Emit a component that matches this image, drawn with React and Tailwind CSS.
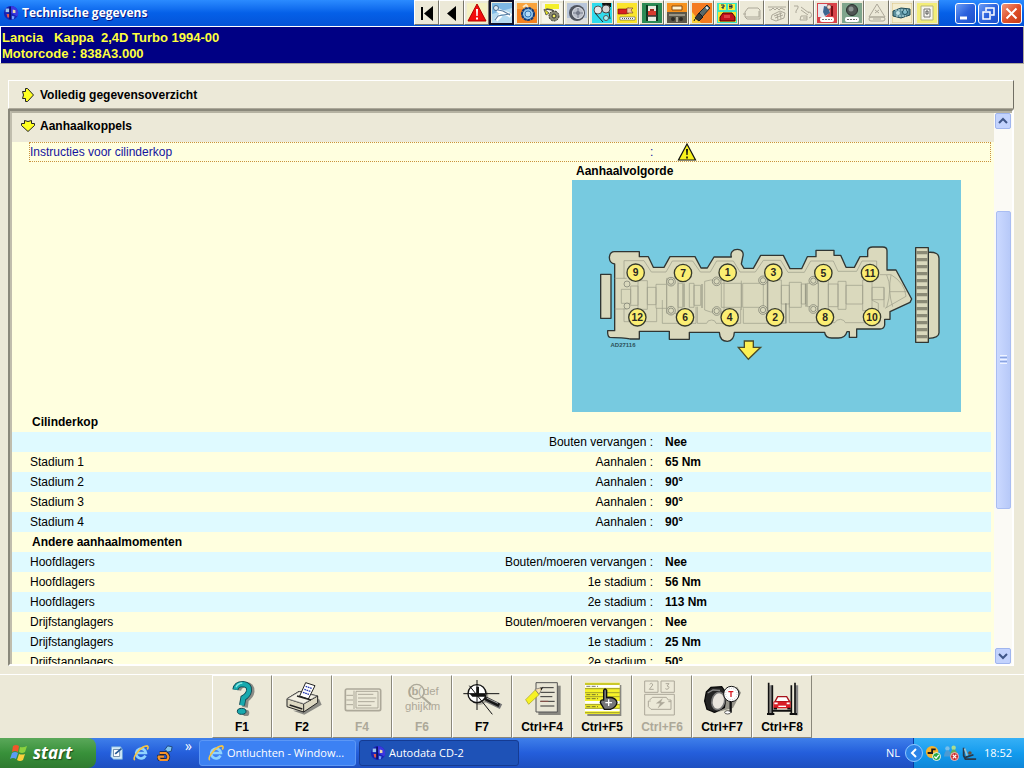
import React, { useState } from "react";

const rows = [
  { title: "Cilinderkop" },
  { label: "", name: "Bouten vervangen", value: "Nee" },
  { label: "Stadium 1", name: "Aanhalen", value: "65 Nm" },
  { label: "Stadium 2", name: "Aanhalen", value: "90°" },
  { label: "Stadium 3", name: "Aanhalen", value: "90°" },
  { label: "Stadium 4", name: "Aanhalen", value: "90°" },
  { title: "Andere aanhaalmomenten" },
  { label: "Hoofdlagers", name: "Bouten/moeren vervangen", value: "Nee" },
  { label: "Hoofdlagers", name: "1e stadium", value: "56 Nm" },
  { label: "Hoofdlagers", name: "2e stadium", value: "113 Nm" },
  { label: "Drijfstanglagers", name: "Bouten/moeren vervangen", value: "Nee" },
  { label: "Drijfstanglagers", name: "1e stadium", value: "25 Nm" },
  { label: "Drijfstanglagers", name: "2e stadium", value: "50°" },
];

// Title bar icons, drawn on a 20x20 grid
const modules = [
  {
    name: "Eerste",
    art: (
      <>
        <path d="M4 4h2v13H4z" fill="#000" />
        <path d="M16 3v15L7 10.500z" fill="#000" />
      </>
    ),
  },
  { name: "Vorige", art: <path d="M14 3v15L5 10.500z" fill="#000" /> },
  {
    name: "Waarschuwingen",
    art: (
      <>
        <path d="M0 0h20v20H0z" fill="#f4f1c4" />
        <path d="M10 1l9 17H1z" fill="#f20d0d" stroke="#b30000" />
        <path d="M9 6h2l-.3 7H9.300zM9 14.500h2v2H9z" fill="#fff" />
      </>
    ),
  },
  {
    name: "Technische gegevens",
    active: true,
    art: (
      <>
        <path d="M0 0h20v20H0z" fill="#b5daf1" />
        <path d="M0 0h20v5L0 11z" fill="#7db8e4" />
        <path d="M3 4l4 4 9 3 3 2M4 17l5-5" fill="none" stroke="#fff" strokeWidth="4" />
        <path d="M6 7l5 1 7 4M3 17l3-4 5-1 7-1" fill="none" stroke="#5b7fa3" strokeWidth="1.200" />
        <circle cx="4" cy="5" r="2.500" fill="#dcebf5" stroke="#46698c" />
      </>
    ),
  },
  {
    name: "Distributieriem",
    art: (
      <>
        <path d="M0 0h20v20H0z" fill="#f58220" />
        <path d="M0 0h20v6H0z" fill="#f9a33c" />
        <circle cx="11" cy="11" r="6" fill="#8fc4ea" stroke="#123a78" strokeWidth="2" strokeDasharray="3 .5" />
        <circle cx="11" cy="11" r="3" fill="#b7dcf5" stroke="#3274b5" />
        <path d="M6 4l3-2 2 2" fill="none" stroke="#fbe7c4" strokeWidth="2" />
      </>
    ),
  },
  {
    name: "Onderhoud",
    art: (
      <>
        <path d="M0 0h20v20H0z" fill="#f7f5ea" />
        <path d="M3 1h14v5H3z" fill="#f3ef2b" />
        <path d="M2 8l3-2 5 1 4 3" fill="none" stroke="#555" strokeWidth="1.500" />
        <circle cx="12" cy="13" r="5" fill="#8b8b76" stroke="#33332a" strokeDasharray="2 1" />
        <circle cx="12" cy="13" r="2" fill="#f1ee61" stroke="#333" />
        <path d="M2 6l5 4-3 2z" fill="#ece91b" stroke="#665" />
      </>
    ),
  },
  {
    name: "Banden",
    art: (
      <>
        <path d="M0 0h20v20H0z" fill="#b9c6da" />
        <path d="M0 15h20v5H0z" fill="#dedfe0" />
        <ellipse cx="10" cy="10" rx="8" ry="8" fill="#50545e" />
        <circle cx="11" cy="10" r="5.500" fill="#b9bdc8" stroke="#e0e3ea" />
        <circle cx="11" cy="10" r="2" fill="#6a6f7e" />
        <path d="M11 5v10M6 10h10" stroke="#777d8c" />
      </>
    ),
  },
  {
    name: "Riemen",
    art: (
      <>
        <path d="M0 0h20v20H0z" fill="#2fdced" />
        <path d="M10 0h9v4l-8 1z" fill="#111" />
        <circle cx="6" cy="7" r="4" fill="#e8e8e8" stroke="#555" />
        <circle cx="14" cy="6" r="4" fill="#d5d5d5" stroke="#444" />
        <circle cx="14" cy="15" r="2.500" fill="#a8f1f6" stroke="#555" />
        <path d="M3 10l8 9M17 9l1 7" stroke="#222" />
      </>
    ),
  },
  {
    name: "Sleutels",
    art: (
      <>
        <path d="M0 0h20v20H0z" fill="#fbe52c" />
        <path d="M1 6h8l3-1v5l-3 1H1z" fill="#d91f1f" stroke="#701010" strokeWidth=".6" />
        <path d="M10 5h6l-2 2 2 3h-6z" fill="#f3c4a2" stroke="#6b4120" strokeWidth=".6" />
        <path d="M3 14h15v3H3z" fill="#fff" stroke="#555" strokeWidth=".6" />
        <path d="M5 15.500h11" stroke="#555" strokeDasharray="1 1" />
      </>
    ),
  },
  {
    name: "Hefpunten",
    art: (
      <>
        <path d="M0 0h20v20H0z" fill="#2c8a55" />
        <path d="M5 3h10v15H5z" fill="#e6e9df" />
        <path d="M5 2v16M15 2v16" stroke="#0d3820" strokeWidth="2" />
        <path d="M6 8h8v5H6z" fill="#d83a2e" />
        <path d="M5 13h10" stroke="#333" strokeWidth="1.500" />
        <path d="M8 6h4v2H8z" fill="#9c2a20" />
      </>
    ),
  },
  {
    name: "Motormanagement",
    art: (
      <>
        <path d="M0 0h20v10H0z" fill="#f6921e" />
        <path d="M0 9h20v11H0z" fill="#5c584b" />
        <path d="M5 3h10v4H5z" fill="#fdf1cf" stroke="#8a4b0a" />
        <path d="M2 11h16v2H2z" fill="#989383" />
        <circle cx="6" cy="16" r="2" fill="#2c2a24" />
        <circle cx="14" cy="16" r="2" fill="#2c2a24" />
        <path d="M9 14h2v5H9z" fill="#a9a493" />
      </>
    ),
  },
  {
    name: "Bougies",
    art: (
      <>
        <path d="M0 0h20v20H0z" fill="#f47b20" />
        <path d="M0 9l9 11H0z" fill="#fbd13a" />
        <path d="M15 2l3 3-8 9-4-3z" fill="#5a6a6a" stroke="#20292c" />
        <path d="M7 10l4 4-4 4-4-3z" fill="#31393b" stroke="#161b1c" />
        <path d="M14 4l2 2" stroke="#e5eded" strokeWidth="2" />
        <path d="M3 16l-1 2" stroke="#111" />
      </>
    ),
  },
  {
    name: "Storingscodes",
    art: (
      <>
        <path d="M0 0h20v20H0z" fill="#3fe4c2" />
        <path d="M2 1h7v6H2zM11 1h7v6h-7z" fill="#f7f13c" />
        <path d="M4 2h3v2H5v1h2M12 2h3v3h-3M12 3.500h3" fill="none" stroke="#1c2450" />
        <path d="M1 9h18v10H1z" fill="#f7e332" />
        <path d="M3 18v-4l3-4h9l3 4v4z" fill="#c4131c" stroke="#4b0508" />
        <path d="M7 12h6v3H7z" fill="#e04242" />
      </>
    ),
  },
  {
    name: "Airconditioning",
    off: true,
    art: <path d="M3 14V9l3-4h10l2 2v9H5l-2-2h14V8M1 11h3" />,
  },
  {
    name: "Motor",
    off: true,
    art: <path d="M1 4h18M2 7h2l2-2 2 2 2-2 2 2 2-2 4 2M5 12l8-4 5 2-1 5-8 3-5-2zM7 13l8-3M8 15l8-3M11 17l-1-6M14 16l-1-7" />,
  },
  {
    name: "Diagnose",
    off: true,
    art: <path d="M2 3h4v2L4 8v2M9 4l8 6M9 7l7 5M16 9a3 3 0 1 1 1 6M9 13h6v4H8zM11 15h4" />,
  },
  {
    name: "Airbag",
    art: (
      <>
        <path d="M0 0h20v20H0z" fill="#d8434a" />
        <path d="M1 1h9l3 8-5 5H1z" fill="#e6e7ef" />
        <path d="M7 3l4 1 2 6-5 3-2-4z" fill="#3d6490" />
        <circle cx="12" cy="4" r="2.200" fill="#f5d9cb" stroke="#333" strokeWidth=".5" />
        <path d="M15 3v10" stroke="#7a0d14" strokeWidth="2" />
        <rect x="3" y="14" width="14" height="5" rx="2" fill="#fff" />
        <path d="M5 16.500h10" stroke="#777" strokeDasharray="2 1" />
      </>
    ),
  },
  {
    name: "ABS",
    art: (
      <>
        <path d="M0 0h20v20H0z" fill="#7fa58c" />
        <circle cx="10" cy="7" r="5.500" fill="#4f5553" stroke="#29302d" />
        <circle cx="9" cy="6" r="2.500" fill="#8b9491" />
        <rect x="3" y="14" width="14" height="5" rx="2" fill="#fff" />
        <path d="M5 16.500h10" stroke="#666" strokeDasharray="2 1" />
      </>
    ),
  },
  {
    name: "Stabiliteit",
    off: true,
    art: <path d="M10 1L2 14h16zM8 7l4 3M12 7l-4 3M4 14h12q2 0 2 2t-2 2H4q-2 0-2-2t2-2M6 16h8" />,
  },
  {
    name: "Klimaatregeling",
    art: (
      <>
        <path d="M0 0h20v20H0z" fill="#f4edcf" stroke="#d9c384" />
        <path d="M1 8l8-3 9 1v6l-9 3-8-2z" fill="#5b8f9d" stroke="#1f4955" />
        <circle cx="6" cy="10" r="2" fill="#bfe1e6" />
        <circle cx="13" cy="9" r="2.500" fill="#82bccb" stroke="#1e4f5e" />
        <path d="M3 7h13M4 13h10" stroke="#bcdde2" strokeDasharray="2 1" />
      </>
    ),
  },
  {
    name: "Elektrische schema's",
    art: (
      <>
        <path d="M0 0h20v20H0z" fill="#f3ed78" />
        <path d="M4 3h12v14H4z" fill="#f6f5ee" stroke="#b8b57c" />
        <path d="M7 6h6v8H7z" fill="none" stroke="#777" />
        <path d="M9 8h2v3H9z" fill="none" stroke="#555" />
      </>
    ),
  },
];

// Function key icons, drawn on a 174x120 grid
const functionKeys = [
  {
    label: "F1",
    art: (
      <>
        <g fill="none" stroke="#8b8b85" strokeWidth="17">
          <path d="M76 43Q79 26 98 26Q117 28 116 47Q114 61 99 70L96 94" />
        </g>
        <circle cx="99" cy="111" r="10" fill="#8b8b85" />
        <path d="M67 41Q70 24 90 24Q110 26 108 44Q106 58 91 66L87 88" fill="none" stroke="#0b4650" strokeWidth="18" />
        <path d="M67 41Q70 24 90 24Q110 26 108 44Q106 58 91 66L87 88" fill="none" stroke="#18a9ae" strokeWidth="13" />
        <path d="M69 34Q74 22 88 21" fill="none" stroke="#8be9e4" strokeWidth="4" />
        <ellipse cx="86" cy="106" rx="13" ry="9" fill="#18a9ae" stroke="#0b4650" strokeWidth="3" />
      </>
    ),
  },
  {
    label: "F2",
    art: (
      <>
        <path d="M60 104l34 12 52-30-8-18-50 35z" fill="#8b8b85" />
        <path d="M42 68L78 46l56 14v20l-42 28-50-16z" fill="#ddd8c2" stroke="#222" strokeWidth="3" />
        <path d="M42 68l50 16 42-24M92 84v24" fill="none" stroke="#222" strokeWidth="3" />
        <path d="M43 68l36-21 52 13-39 23z" fill="#f3f0e3" stroke="#777" strokeWidth="2" />
        <path d="M50 87l38 12" stroke="#222" strokeWidth="4" />
        <path d="M80 60L98 20l28 9-20 40z" fill="#fff" stroke="#222" strokeWidth="3" />
        <path d="M98 31l18 6M94 40l18 6M90 49l18 6" stroke="#2438b0" strokeWidth="4" strokeDasharray="5 2" />
        <path d="M72 60l42 12" stroke="#222" strokeWidth="4" />
      </>
    ),
  },
  {
    label: "F4",
    off: true,
    art: (
      <>
        <rect x="37" y="39" width="106" height="65" rx="5" strokeWidth="5" />
        <path d="M63 44v55M40 58h20M40 72h20M40 86h20M69 46h66v50H69z" strokeWidth="3" />
        <path d="M75 55h46M75 66h55M75 77h50M75 88h40" strokeWidth="3" />
      </>
    ),
  },
  {
    label: "F6",
    off: true,
    art: (
      <>
        <circle cx="71" cy="47" r="22" strokeWidth="4" />
        <path d="M87 62l27 24" strokeWidth="6" />
        <g stroke="none" fill="#aca899" fontFamily="Liberation Sans, sans-serif" fontWeight="normal">
          <text x="44" y="58" fontSize="34" fontWeight="bold">(b</text>
          <text x="75" y="58" fontSize="34">(</text>
          <text x="90" y="58" fontSize="34">def</text>
          <text x="36" y="102" fontSize="34">ghijklm</text>
        </g>
      </>
    ),
  },
  {
    label: "F7",
    art: (
      <>
        <circle cx="79" cy="60" r="27" fill="#aaa89d" />
        <circle cx="72" cy="53" r="27" fill="#fff" stroke="#111" strokeWidth="4" />
        <path d="M99 70l45 22" stroke="#777" strokeWidth="16" />
        <path d="M95 66l44 22" stroke="#171717" strokeWidth="11" />
        <path d="M101 66l34 16" stroke="#aaa" strokeWidth="3" />
        <path d="M31 53h108M72 12v90M49 29l69 86" stroke="#111" strokeWidth="3" />
        <path d="M70 32h8v22h18v8H58l-8-9h20z" fill="#111" />
      </>
    ),
  },
  {
    label: "Ctrl+F4",
    art: (
      <>
        <path d="M76 29h67v88H76z" fill="#888780" />
        <path d="M69 20h64v88H69z" fill="#e8e5d5" stroke="#555" strokeWidth="3" />
        <path d="M82 35h40M82 49h43M82 62h36M82 76h43M82 90h42" stroke="#333" strokeWidth="3" />
        <path d="M82 76h24" stroke="#8c5149" strokeWidth="3" />
        <path d="M38 71l30-30 10 15-31 29z" fill="#f7f222" stroke="#a59f16" strokeWidth="2" />
        <path d="M66 40l23-6-11 21z" fill="#f7dfb3" stroke="#666" strokeWidth="2" />
        <path d="M82 38l9-6-6 11z" fill="#111" />
      </>
    ),
  },
  {
    label: "Ctrl+F5",
    art: (
      <>
        <path d="M43 27h102v94H43z" fill="#888780" />
        <path d="M36 20h104v94H36z" fill="#f5f229" />
        <path d="M36 31h104M36 79h104M36 102h104" stroke="#fff" strokeWidth="8" />
        <path d="M36 24h104M36 38h104M36 50h104M36 62h104M36 86h104M36 97h104M36 110h104" stroke="#77772e" strokeWidth="2" />
        <path d="M40 31h35M40 56h35M40 68h35M40 92h35" stroke="#333" strokeWidth="2" strokeDasharray="12 4" />
        <path d="M92 67V43q4-8 9 0v22q28-3 31 15-3 15-20 20H94L82 80q1-10 10-8z" fill="#77777a" stroke="#111" strokeWidth="4" />
        <path d="M97 80h20M107 70v20" stroke="#fff" strokeWidth="4" />
      </>
    ),
  },
  {
    label: "Ctrl+F6",
    off: true,
    art: (
      <>
        <path d="M35 15h40v34H35zM84 15h40v34H84zM35 55h89v62H35zM50 72l8-8h42l6 8h8v28H54l-8-8V75h7M106 77h8" strokeWidth="3" />
        <path d="M50 25q8-7 9 2l-10 13h13M98 23h10l-6 7q9 1 4 8-4 4-9 0" strokeWidth="3" />
        <path d="M88 68l-18 14h12l-7 14 20-17H83z" fill="#aca899" />
      </>
    ),
  },
  {
    label: "Ctrl+F7",
    art: (
      <>
        <path d="M60 112l60-16 24-46-12-18-80 46z" fill="#96948a" />
        <path d="M40 48L54 34 86 32 101 53 94 95 65 109 42 100 35 75z" fill="#242424" stroke="#080808" strokeWidth="4" />
        <ellipse cx="76" cy="75" rx="19" ry="26" fill="#e9e5dd" stroke="#777" strokeWidth="5" transform="rotate(14 76 75)" />
        <path d="M44 51l16-9 21 1" fill="none" stroke="#888" strokeWidth="4" />
        <circle cx="115" cy="54" r="23" fill="#fff" stroke="#111" strokeWidth="3" />
        <circle cx="115" cy="54" r="17" fill="none" stroke="#aaa" strokeWidth="2" strokeDasharray="3 4" />
        <path d="M106 47h15M114 47v16" stroke="#d71920" strokeWidth="4" />
        <path d="M113 78v32" stroke="#111" strokeWidth="7" />
        <ellipse cx="104" cy="109" rx="9" ry="5" fill="#fff" stroke="#111" strokeWidth="2" />
      </>
    ),
  },
  {
    label: "Ctrl+F8",
    art: (
      <>
        <path d="M54 28v90M131 28v90" stroke="#888" strokeWidth="9" />
        <path d="M47 20v94M58 28v86M126 20v94M115 28v86" stroke="#111" strokeWidth="5" />
        <path d="M42 114h22M110 114h22M58 104h58" stroke="#111" strokeWidth="6" />
        <path d="M66 77l8-15h27l9 15z" fill="#fff" stroke="#a6121a" strokeWidth="4" />
        <path d="M61 77h52v20H61z" fill="#d91d26" />
        <path d="M64 82h10M101 82h9" stroke="#fff" strokeWidth="5" />
        <path d="M76 91h23" stroke="#fff" strokeWidth="4" />
        <path d="M62 98h10M103 98h10" stroke="#111" strokeWidth="5" />
      </>
    ),
  },
];

const bolts = [
  [197, 398, 9], [339, 399, 7], [473, 398, 1], [610, 398, 3], [760, 399, 5], [900, 399, 11],
  [202, 532, 12], [345, 532, 6], [479, 532, 4], [615, 532, 2], [765, 532, 8], [906, 531, 10],
];

const smallHoles = [
  [303, 425], [440, 424], [579, 421], [730, 422],
  [303, 512], [440, 513], [579, 510], [730, 507],
];

const CylinderHead = () => (
  <svg viewBox="6 120 1167 696" className="block w-full bg-[#77cae0]" role="img" aria-label="Aanhaalvolgorde cilinderkop">
    <g fill="#dad9bd" stroke="#303633" strokeWidth="4" strokeLinejoin="round">
      <path d="M92 403h31v132H92z" />
      <path d="M133 335H208V350H235L250 382H282L300 350H375L393 384H412L432 351H484C480 338 488 328 502 328C518 328 522 340 518 352L514 372L522 385H550L572 346H640L660 386H695L712 350H738V331H792V346H812L828 382H853L870 350H893V332Q895 321 908 321H938Q951 321 951 332V390H978L1025 477L1020 487L960 515V538H944V555Q942 567 930 567H860V592H838V575H831Q826 594 805 594H785Q766 594 764 577H493Q492 603 472 604Q450 604 448 577H358V598H298V574H208V597H180Q175 594 120 592Q112 590 113 572H134V372Q118 370 118 352Q120 335 133 335Z" />
      <path d="M1075 337Q1107 335 1107 355V578Q1107 594 1075 595Z" />
      <path d="M1037 323h38v284h-38z" />
    </g>
    <path d="M1056 333v266" stroke="#8b8b77" strokeWidth="34" strokeDasharray="10 11" />
    <g fill="none" stroke="#9a9b88" strokeWidth="2">
      <path d="M162 415V362H222L244 396H288L307 363H368L391 396H421L440 363H490L510 396H556L580 361H632L654 397H703L722 363H790L804 394H860L876 363H920V394" />
      <path d="M162 505V545H260V505M277 480V550H378V500M382 500V550H410Q412 540 425 540Q436 540 438 550H512V505M520 505V550H647V490M658 490V548H795Q798 538 812 538Q824 540 826 548H930" />
      <path d="M134 415H170M134 507H170M154 448h28v42h-28zM182 438h22v58h-22zM204 422h28v86h-28zM232 442h26v52h-26zM258 433h32v72h-32zM290 415h34v105h-34zM324 430h14v72h-14zM358 430h14v72h-14zM372 436h20v60h-20zM404 424l18-4h40v96h-40l-18-6zM454 430h60v72h-60zM514 422v88M518 430h62v72h-62zM594 420h40v92h-40zM634 436h24v56h-24zM658 427h36v75h-36zM694 432h12v60h-12zM712 430h33v70h-33zM745 420h30v92h-30zM775 432h29v68h-29zM804 424h24v84h-24zM828 436h50v56h-50zM878 420h28v92h-28zM906 442h36v37h-36z" />
      <path d="M929 404h34q42 25 45 65l-63 36M950 405q18 38 0 98M963 405q-10 50 5 95M960 455h50" />
      <path d="M905 480l20 10v40M942 442v60" />
    </g>
    <g stroke="#64665a" strokeWidth="2">
      <path d="M342 430v72M396 432v72M592 420v92M648 490v60M708 430v70" />
    </g>
    <g fill="#dad9bd" stroke="#73756a" strokeWidth="2">
      <circle cx="171" cy="432" r="9" />
      <circle cx="171" cy="498" r="9" />
      {smallHoles.map(([x, y]) => (
        <g key={x + "-" + y}>
          <circle cx={x} cy={y} r="13" />
          <circle cx={x} cy={y} r="8" />
        </g>
      ))}
    </g>
    <g fontFamily="Liberation Sans, sans-serif" fontWeight="bold" fill="#292722" textAnchor="middle">
      {bolts.map(([x, y, n]) => (
        <g key={n}>
          <circle cx={x} cy={y} r="26" fill="#fbee72" stroke="#363a2c" strokeWidth="4" />
          <text x={x} y={y + 11} fontSize="31">{n}</text>
        </g>
      ))}
      <text x="159" y="621" fontSize="18" fill="#2d5058">AD27116</text>
    </g>
    <path d="M523 603h27v19h22l-37 36-30-36h18z" fill="#fdf053" stroke="#4b4b27" strokeWidth="4" />
  </svg>
);

const DiskLogo = () => (
  <svg viewBox="0 0 18 18" className="size-4 shrink-0" aria-hidden="true">
    <circle cx="9" cy="9" r="8" fill="#1724b5" />
    <path d="M9 1a8 8 0 0 1 7 12l-7-4z" fill="#3b37e0" />
    <path d="M3 4h4v4H3z" fill="#9bc7ef" />
    <path d="M4 10h3v4H5z" fill="#e4554d" />
    <path d="M11 5l3 1v3h-3z" fill="#e7d6ae" />
    <path d="M10 12l3 1-1 3h-2z" fill="#6fa0ff" />
    <path d="M8 2v14" stroke="#090c54" strokeWidth="1.500" />
  </svg>
);

const ExplorerLogo = () => (
  <svg viewBox="0 0 18 18" className="size-4 shrink-0" aria-hidden="true">
    <path d="M14 12a5.500 5.500 0 1 1 .5-3H5" fill="none" stroke="#8fd3ff" strokeWidth="3" />
    <path d="M2 17C-1 14 9 1 16 1q2 1 0 4" fill="none" stroke="#f5c443" strokeWidth="1.800" />
  </svg>
);

const ArrowMark = ({ down }) => (
  <svg viewBox="0 0 14 14" className={down ? "size-[14px] rotate-90" : "size-[14px]"} aria-hidden="true">
    <path d="M1.500 3.500h3v-3h2l6 6.500-6 6.500h-2v-3h-3l1-3.500z" fill="#ffff21" stroke="#222" />
  </svg>
);

const ModuleButton = ({ item }) => (
  <button
    aria-label={item.name}
    disabled={item.off}
    className={
      item.active
        ? "flex h-[25px] w-[25px] items-center justify-center border-2 border-[#10102a] bg-[#ece9d8]"
        : "flex h-[25px] w-[25px] items-center justify-center border border-t-white border-r-[#77756a] border-b-[#77756a] border-l-white bg-[#ece9d8]"
    }
  >
    <svg viewBox="0 0 20 20" className="size-5" fill="none" stroke={item.off ? "#aca899" : "none"}>
      {item.art}
    </svg>
  </button>
);

const WindowButton = ({ name, close, children }) => (
  <button
    aria-label={name}
    className={
      close
        ? "flex size-[21px] items-center justify-center rounded-[3px] border border-white bg-linear-to-br from-[#f0967a] via-[#e0512b] to-[#c63a15]"
        : "flex size-[21px] items-center justify-center rounded-[3px] border border-white bg-linear-to-br from-[#6d9df5] via-[#2c62dd] to-[#1c50cb]"
    }
  >
    <svg viewBox="0 0 19 19" className="size-[19px]" fill="none" stroke="#fff" strokeWidth="2">
      {children}
    </svg>
  </button>
);

const FunctionButton = ({ item }) => (
  <button
    disabled={item.off}
    className="flex h-[63px] w-[60px] flex-col items-center border border-t-white border-r-[#8a887b] border-b-[#8a887b] border-l-white text-[12px] leading-4 font-bold text-black disabled:text-[#aca899]"
  >
    <svg viewBox="0 0 174 120" className="h-[40px] w-[58px] shrink-0" fill="none" stroke={item.off ? "#aca899" : "none"} aria-hidden="true">
      {item.art}
    </svg>
    <span className="pt-[3px]">{item.label}</span>
  </button>
);

const ScrollButton = ({ name, up }) => (
  <button aria-label={name} className="flex size-4 shrink-0 items-center justify-center rounded-[2px] border border-[#9fb5ee] bg-[#c3d3fd]">
    <svg viewBox="0 0 10 10" className={up ? "size-[10px]" : "size-[10px] rotate-180"} fill="none" stroke="#3f5688" strokeWidth="2">
      <path d="M1 7l4-4 4 4" />
    </svg>
  </button>
);

const App = () => {
  const [open, setOpen] = useState(true);

  return (
    <div className="flex h-screen flex-col overflow-hidden bg-[#ece9d8] font-['Liberation_Sans',Arial,sans-serif] text-[12px] text-black">
      {/* Title bar */}
      <header className="flex h-[26px] shrink-0 items-center bg-linear-to-b from-[#2b8bff] via-[#0560e8] to-[#0453d8] pl-[3px]">
        <DiskLogo />
        <h1 className="flex-1 truncate pl-[3px] font-['Open_Sans',sans-serif] text-[12px] font-bold text-white text-shadow-[1px_1px_0_#0a1883]">
          Technische gegevens
        </h1>
        <div className="flex self-start">
          {modules.map((item) => (
            <ModuleButton key={item.name} item={item} />
          ))}
        </div>
        <div className="flex gap-[2px] pr-[2px] pl-4">
          <WindowButton name="Minimaliseren">
            <path d="M4 14h7" strokeWidth="3" />
          </WindowButton>
          <WindowButton name="Verkleinen">
            <path d="M7 7V4h8v7h-3M4 8h7v7H4z" strokeWidth="1.500" />
          </WindowButton>
          <WindowButton name="Sluiten" close>
            <path d="M4.500 4.500l10 10M14.500 4.500l-10 10" />
          </WindowButton>
        </div>
      </header>

      <div className="shrink-0 border border-t-white border-r-[#aca899] border-b-[#aca899] border-l-white bg-[#000084] px-px pt-[3px] pb-px text-[13px] leading-4 font-bold whitespace-pre text-[#ffff3c]">
        <p>Lancia   Kappa  2,4D Turbo 1994-00</p>
        <p>Motorcode : 838A3.000</p>
      </div>

      <main className="flex min-h-0 flex-1 flex-col px-2 pt-4 pb-2">
        <button className="mr-[2px] flex h-[29px] shrink-0 items-center gap-[5px] border border-t-white border-r-[#716f64] border-b-[#aca899] border-l-white pl-[12px] text-left font-bold">
          <ArrowMark />
          Volledig gegevensoverzicht
        </button>

        <section className="mr-[2px] flex min-h-0 flex-1 border-2 border-t-[#8a887b] border-r-white border-b-white border-l-[#8a887b]">
          <div className="flex min-h-0 min-w-0 flex-1 border-t-2 border-l-2 border-t-[#b5b2a2] border-l-[#c0bdad]">
            <div className="min-w-0 flex-1 overflow-hidden bg-[#ffffdf] pr-[3px]">
              <h2 className="-mr-[3px] bg-[#ece9d8]">
                <button
                  onClick={() => setOpen(!open)}
                  aria-expanded={open}
                  className="flex h-[29px] w-full items-center gap-[5px] pb-1 pl-[9px] text-left font-bold"
                >
                  <ArrowMark down />
                  Aanhaalkoppels
                </button>
              </h2>

              {open && (
                <>
                  <div className="ml-[17px] flex h-5 items-center border border-dotted border-[#c9923c] text-[#1414a0]">
                    <a href="#cilinderkop" className="flex-1">Instructies voor cilinderkop</a>
                    <span className="w-[27px]">:</span>
                    <div className="w-[313px]">
                      <svg viewBox="0 0 20 18" className="h-[18px] w-5" role="img" aria-label="Let op">
                        <path d="M10 1l8.500 16h-17z" fill="#f8f21c" stroke="#111" strokeWidth="1.200" />
                        <path d="M9 6h2l-.4 6H9.400zM9.200 13.500h1.600v2H9.200z" fill="#111" />
                      </svg>
                    </div>
                  </div>

                  <figure className="mr-[30px] ml-auto w-[389px]">
                    <figcaption className="pl-1 leading-[18px] font-bold">Aanhaalvolgorde</figcaption>
                    <CylinderHead />
                  </figure>

                  <table id="cilinderkop" className="w-full table-fixed border-collapse">
                    <colgroup>
                      <col />
                      <col />
                      <col className="w-[338px]" />
                    </colgroup>
                    <tbody>
                      {rows.map((row, i) => (
                        <tr key={i} className="h-5 odd:bg-[#ffffdf] even:bg-[#dffaff]">
                          {row.title ? (
                            <th colSpan={3} scope="colgroup" className="pl-[20px] text-left font-bold">
                              {row.title}
                            </th>
                          ) : (
                            <>
                              <td className="pl-[18px]">{row.label}</td>
                              <td className="text-right">{row.name} :</td>
                              <td className="pl-3 font-bold">{row.value}</td>
                            </>
                          )}
                        </tr>
                      ))}
                    </tbody>
                  </table>
                </>
              )}
            </div>

            <div className="flex w-[18px] shrink-0 flex-col items-center bg-[#fbfaf5] px-px">
              <ScrollButton name="Omhoog" up />
              <div className="grow-[82] basis-0" />
              <div className="flex w-[15px] grow-[297] basis-0 flex-col items-center justify-center gap-px rounded-[2px] border border-[#a9bdf2] bg-linear-to-r from-[#cbd9ff] to-[#b7c9f8]">
                <span className="h-px w-[7px] bg-[#eef3ff]" />
                <span className="h-px w-[7px] bg-[#8ba5e0]" />
                <span className="h-px w-[7px] bg-[#eef3ff]" />
                <span className="h-px w-[7px] bg-[#8ba5e0]" />
                <span className="h-px w-[7px] bg-[#eef3ff]" />
              </div>
              <div className="grow-[140] basis-0" />
              <ScrollButton name="Omlaag" />
            </div>
          </div>
        </section>
      </main>

      {/* Function keys */}
      <nav className="flex shrink-0 justify-center border-t border-white">
        {functionKeys.map((item) => (
          <FunctionButton key={item.label} item={item} />
        ))}
      </nav>

      <footer className="flex h-[30px] shrink-0 items-stretch bg-linear-to-b from-[#3f7fea] via-[#245edb] to-[#1e4fc0] font-['Open_Sans',sans-serif] text-[11px] text-white">
        <button className="flex w-[96px] items-center gap-[5px] rounded-r-lg bg-linear-to-b from-[#5aa85a] via-[#38913a] to-[#2f7a30] pl-[10px] text-[17px] font-bold italic text-shadow-[1px_1px_1px_#1b4a1b]">
          <svg viewBox="0 0 18 18" className="size-[18px]" aria-hidden="true">
            <path d="M3 2q3-2 6 0L8 8Q5 6 2 8z" fill="#f1562b" />
            <path d="M10 3q3 1 7-1l-2 6q-3 2-6 0z" fill="#8bd13f" />
            <path d="M2 9q3-2 6 0l-2 6q-3-2-6 0z" fill="#5b9cf5" />
            <path d="M9 10q3 1 6 0l-2 6q-3 2-6 0z" fill="#fbd03c" />
          </svg>
          start
        </button>

        <div className="flex w-[103px] items-center gap-2 pl-[13px]">
          <button aria-label="Bureaublad weergeven">
            <svg viewBox="0 0 18 18" className="size-4">
              <path d="M3 2h10l2 3v11H5L2 13z" fill="#d9effb" stroke="#6fa6d8" />
              <path d="M5 5h7v8H5z" fill="#fff" stroke="#5f7f9f" />
              <path d="M7 10l7-6" stroke="#255a96" strokeWidth="2" />
            </svg>
          </button>
          <button aria-label="Internet Explorer">
            <ExplorerLogo />
          </button>
          <button aria-label="Media">
            <svg viewBox="0 0 18 18" className="size-4">
              <path d="M3 9h7q5 4 1 8H4q-3-2-2-4h6" fill="none" stroke="#18213e" strokeWidth="4" />
              <path d="M3 9h7q5 4 1 8H4q-3-2-2-4h6" fill="none" stroke="#f5932b" strokeWidth="2.500" />
              <path d="M9 5l3-4 5 1-1 5-4 1z" fill="#7ec4ee" stroke="#1c4377" />
            </svg>
          </button>
          <span className="self-start pl-1 text-[14px] leading-4">»</span>
        </div>

        <div className="flex flex-1 items-center gap-[3px]">
          <button className="flex h-[26px] w-[157px] items-center gap-[3px] rounded-[3px] border border-[#5c97f5] bg-[#3c81f3] pl-2">
            <ExplorerLogo />
            Ontluchten - Window...
          </button>
          <button className="flex h-[26px] w-[160px] items-center gap-[3px] rounded-[3px] border border-[#153b92] bg-[#1e52b7] pl-[10px]">
            <DiskLogo />
            Autodata CD-2
          </button>
        </div>

        <span className="self-center pr-[13px]">NL</span>
        <div className="flex w-[111px] items-center gap-[2px] border-l border-[#0b3ba0] bg-linear-to-b from-[#35b0f6] via-[#129cee] to-[#0f86d8]">
          <button aria-label="Verborgen pictogrammen" className="-ml-[9px] flex size-[18px] items-center justify-center rounded-full border border-[#8fc8ff] bg-[#2b83e8]">
            <svg viewBox="0 0 10 10" className="size-[10px]" fill="none" stroke="#fff" strokeWidth="2">
              <path d="M7 1L3 5l4 4" />
            </svg>
          </button>
          <svg viewBox="0 0 18 18" className="size-4" aria-hidden="true">
            <circle cx="8" cy="8" r="7" fill="#f6b32f" />
            <path d="M3 9h5V5h4" fill="none" stroke="#1b1b1b" strokeWidth="2" />
            <circle cx="13" cy="13" r="4.500" fill="#26a844" stroke="#fff" />
            <path d="M10.500 13l2 2 3-4" fill="none" stroke="#fff" strokeWidth="1.500" />
          </svg>
          <svg viewBox="0 0 18 18" className="size-4" aria-hidden="true">
            <circle cx="5" cy="4" r="2.500" fill="#79bfe9" />
            <path d="M1 13q1-7 4-7t5 7z" fill="#4c9bd3" />
            <circle cx="12" cy="3" r="2.500" fill="#a9dc91" />
            <path d="M8 12q1-7 4-7t5 7z" fill="#64ad5c" />
            <circle cx="13" cy="13" r="4.500" fill="#cb2a2a" stroke="#f3cccc" />
            <path d="M11 11l4 4M15 11l-4 4" stroke="#fff" strokeWidth="1.300" />
          </svg>
          <svg viewBox="0 0 18 18" className="size-4" fill="none" aria-hidden="true">
            <path d="M3 3v9l2 4h12M5 14l9-3" stroke="#26384c" strokeWidth="2" />
            <path d="M4 4l3 8" stroke="#9fc0cc" strokeWidth="2" />
            <circle cx="10" cy="9" r="2" fill="#6b4d36" />
          </svg>
          <span className="flex-1 pr-3 text-right">18:52</span>
        </div>
      </footer>
    </div>
  );
};

export default App;
